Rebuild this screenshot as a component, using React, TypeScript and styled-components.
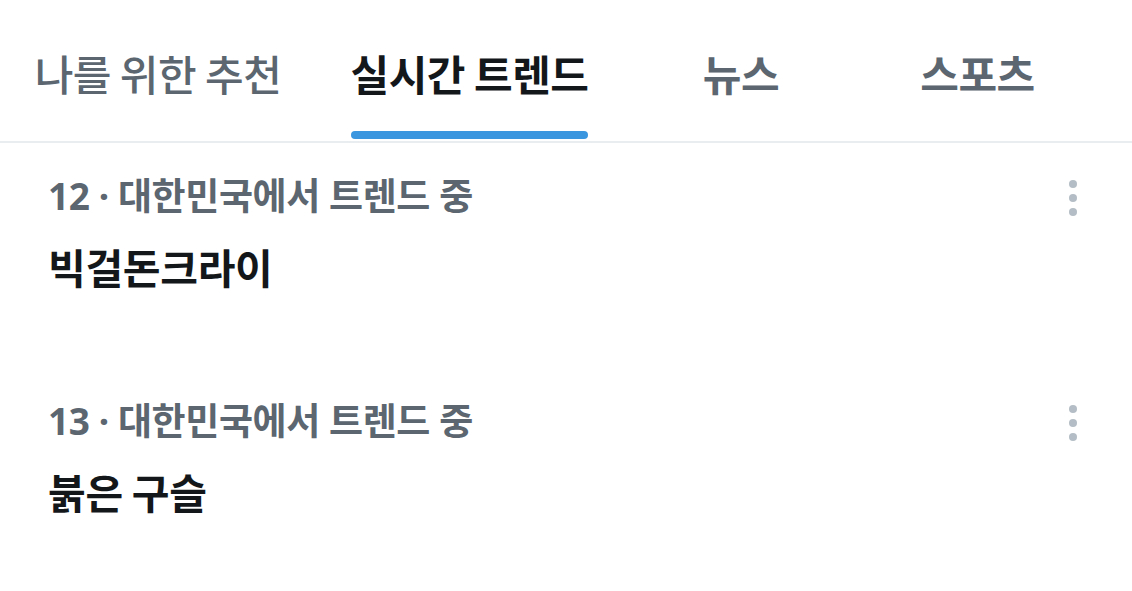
import React from "react";
import styled, { createGlobalStyle } from "styled-components";

const Global = createGlobalStyle`
  html, body { margin: 0; padding: 0; background: #fff; }
  body { font-family: "Noto Sans", "Noto Sans CJK KR", sans-serif; }
`;

const Page = styled.div`
  width: 1132px;
  height: 591px;
  background: #fff;
  overflow: hidden;
`;

const TabBar = styled.nav`
  display: flex;
  padding-right: 36px;
  border-bottom: 2px solid #e9edf0;
  height: 143px;
  box-sizing: border-box;
`;

const Tab = styled.div<{ $w: number }>`
  width: ${(p) => p.$w}px;
  display: flex;
  justify-content: center;
  padding-top: 44px;
  box-sizing: border-box;
`;

const TabLabel = styled.span<{ $active?: boolean; $weight: number }>`
  position: relative;
  font-family: "Noto Sans CJK KR", sans-serif;
  font-size: 42px;
  line-height: 58px;
  height: 95px;
  font-weight: ${(p) => p.$weight};
  color: ${(p) => (p.$active ? "#14171a" : "#5b6670")};
  letter-spacing: -0.5px;
  white-space: nowrap;
`;

const Indicator = styled.div`
  position: absolute;
  left: 0;
  right: 0;
  bottom: 0;
  height: 8px;
  border-radius: 4px;
  background: #3a96df;
`;

const List = styled.div`
  display: flex;
  flex-direction: column;
`;

const Trend = styled.div`
  display: flex;
  justify-content: space-between;
  padding: 28px 48px 0 48px;
  height: 225px;
  box-sizing: border-box;
`;

const TrendText = styled.div`
  display: flex;
  flex-direction: column;
`;

const Meta = styled.div`
  font-size: 37px;
  line-height: 50px;
  font-weight: 700;
  color: #5b6670;
  letter-spacing: -0.4px;
  white-space: nowrap;
`;

const Title = styled.div`
  font-family: "Noto Sans CJK KR", sans-serif;
  font-size: 41px;
  line-height: 56px;
  margin-top: 17px;
  font-weight: 700;
  color: #14171a;
  letter-spacing: -0.3px;
`;

const More = styled.div`
  display: flex;
  flex-direction: column;
  gap: 6px;
  padding-top: 9px;
  padding-right: 7px;
`;

const Dot = styled.span`
  width: 8px;
  height: 8px;
  border-radius: 50%;
  background: #b4bdc5;
`;

const tabs = [
  { label: "나를 위한 추천", w: 316, weight: 500 },
  { label: "실시간 트렌드", w: 307, weight: 700, active: true },
  { label: "뉴스", w: 236, weight: 700 },
  { label: "스포츠", w: 237, weight: 700 },
];

const trends = [
  { rank: 12, title: "빅걸돈크라이" },
  { rank: 13, title: "붉은 구슬" },
];

export default function App() {
  return (
    <Page>
      <Global />
      <TabBar>
        {tabs.map((t) => (
          <Tab key={t.label} $w={t.w}>
            <TabLabel $active={t.active} $weight={t.weight}>
              {t.label}
              {t.active && <Indicator />}
            </TabLabel>
          </Tab>
        ))}
      </TabBar>
      <List>
        {trends.map((tr) => (
          <Trend key={tr.rank}>
            <TrendText>
              <Meta>{tr.rank} · 대한민국에서 트렌드 중</Meta>
              <Title>{tr.title}</Title>
            </TrendText>
            <More>
              <Dot />
              <Dot />
              <Dot />
            </More>
          </Trend>
        ))}
      </List>
    </Page>
  );
}
